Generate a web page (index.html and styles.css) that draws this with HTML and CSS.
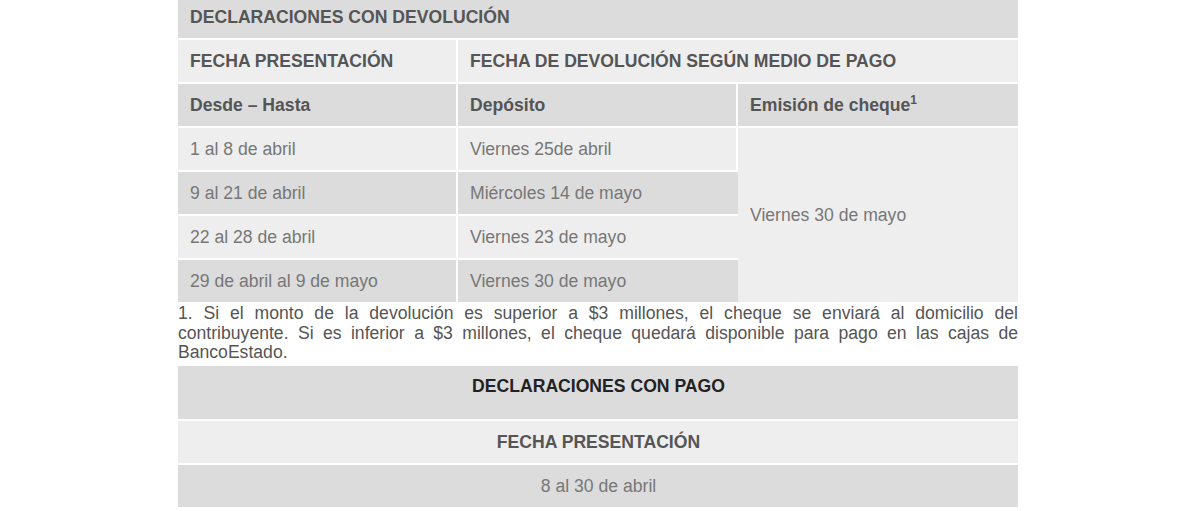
FILE: index.html
```html
<!DOCTYPE html>
<html lang="es">
<head>
<meta charset="utf-8">
<title>Declaraciones</title>
<link rel="stylesheet" href="styles.css">
</head>
<body>
<div class="content">
  <table class="tabla">
    <colgroup><col class="c"><col class="c"><col class="c"></colgroup>
    <tr class="dark"><th colspan="3" class="titulo">DECLARACIONES CON DEVOLUCIÓN</th></tr>
    <tr class="light"><th>FECHA PRESENTACIÓN</th><th colspan="2">FECHA DE DEVOLUCIÓN SEGÚN MEDIO DE PAGO</th></tr>
    <tr class="dark"><th>Desde – Hasta</th><th>Depósito</th><th>Emisión de cheque<sup>1</sup></th></tr>
    <tr class="light"><td>1 al 8 de abril</td><td>Viernes 25de abril</td><td rowspan="4" class="cheque">Viernes 30 de mayo</td></tr>
    <tr class="dark"><td>9 al 21 de abril</td><td>Miércoles 14 de mayo</td></tr>
    <tr class="light"><td>22 al 28 de abril</td><td>Viernes 23 de mayo</td></tr>
    <tr class="dark"><td>29 de abril al 9 de mayo</td><td>Viernes 30 de mayo</td></tr>
  </table>
  <p class="nota">1. Si el monto de la devolución es superior a $3 millones, el cheque se enviará al domicilio del contribuyente. Si es inferior a $3 millones, el cheque quedará disponible para pago en las cajas de BancoEstado.</p>
  <table class="tabla centrada">
    <tr class="dark"><th class="titulo2">DECLARACIONES CON PAGO</th></tr>
    <tr class="light"><th>FECHA PRESENTACIÓN</th></tr>
    <tr class="dark"><td>8 al 30 de abril</td></tr>
  </table>
</div>
</body>
</html>
```
FILE: styles.css
```css
html, body {
  margin: 0;
  padding: 0;
  background: #fff;
}
body {
  font-family: "Liberation Sans", Arial, sans-serif;
  font-size: 17.6px;
}
.content {
  width: 840px;
  margin: -4px 0 0 178px;
}
.tabla {
  width: 840px;
  table-layout: fixed;
  border-collapse: separate;
  border-spacing: 0;
}
.tabla col.c {
  width: 280px;
}
.tabla th,
.tabla td {
  height: 20px;
  line-height: 20px;
  padding: 11px 11px 11px 12px;
  text-align: left;
  vertical-align: middle;
  border-right: 2px solid #fff;
  border-bottom: 2px solid #fff;
}
.tabla tr > :last-child {
  border-right: 0;
}
.tabla th {
  font-weight: bold;
  color: #555;
}
.tabla td {
  font-weight: normal;
  color: #777;
}
.tabla .cheque {
  border-right: 0;
}
.dark > th,
.dark > td {
  background: #dcdcdc;
}
.light > th,
.light > td,
.tabla .cheque {
  background: #eeeeee;
}
.tabla sup {
  font-size: 12px;
  line-height: 0;
  vertical-align: 7px;
}
.nota {
  margin: 0;
  font-size: 17.6px;
  line-height: 19.5px;
  color: #555;
  text-align: justify;
}
.centrada {
  margin-top: 3px;
}
.centrada th,
.centrada td {
  text-align: center;
}
.centrada .titulo2 {
  color: #222;
  padding-top: 10px;
  padding-bottom: 23px;
}
```
